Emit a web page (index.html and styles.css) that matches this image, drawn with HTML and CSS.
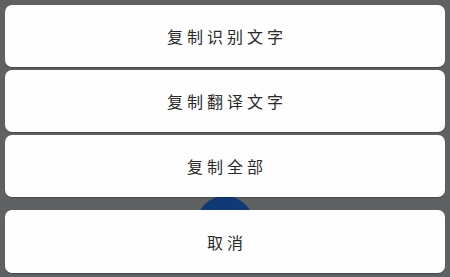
FILE: index.html
```html
<!DOCTYPE html>
<html lang="zh">
<head>
<meta charset="utf-8">
<link rel="stylesheet" href="styles.css">
</head>
<body>
<div class="screen">
  <div class="backdrop-dot"></div>
  <div class="sheet">
    <div class="group">
      <button class="item">复制识别文字</button>
      <button class="item">复制翻译文字</button>
      <button class="item">复制全部</button>
    </div>
    <button class="item cancel">取消</button>
  </div>
</div>
</body>
</html>
```
FILE: styles.css
```css
html, body {
  margin: 0;
  padding: 0;
  background: #606163;
}
.screen {
  position: relative;
  width: 450px;
  height: 277px;
  overflow: hidden;
  background: #606163;
}
.backdrop-dot {
  position: absolute;
  left: 196px;
  top: 196px;
  width: 58px;
  height: 58px;
  border-radius: 50%;
  background: #0e3a78;
}
.sheet {
  position: relative;
  display: flex;
  flex-direction: column;
  gap: 13px;
  padding: 5px 5px 0 5px;
}
.group {
  display: flex;
  flex-direction: column;
  gap: 3px;
}
.item {
  display: flex;
  align-items: center;
  justify-content: center;
  height: 62px;
  width: 440px;
  border: none;
  border-radius: 7px;
  background: #fefefe;
  padding: 0 0 0 4px;
  margin: 0;
  font-family: "Noto Sans CJK SC", "Noto Sans", sans-serif;
  font-size: 16px;
  letter-spacing: 4px;
  color: #2a2a2a;
  box-shadow: 0 1px 1px rgba(0,0,0,0.25);
}
.cancel {
  height: 63px;
}
```
